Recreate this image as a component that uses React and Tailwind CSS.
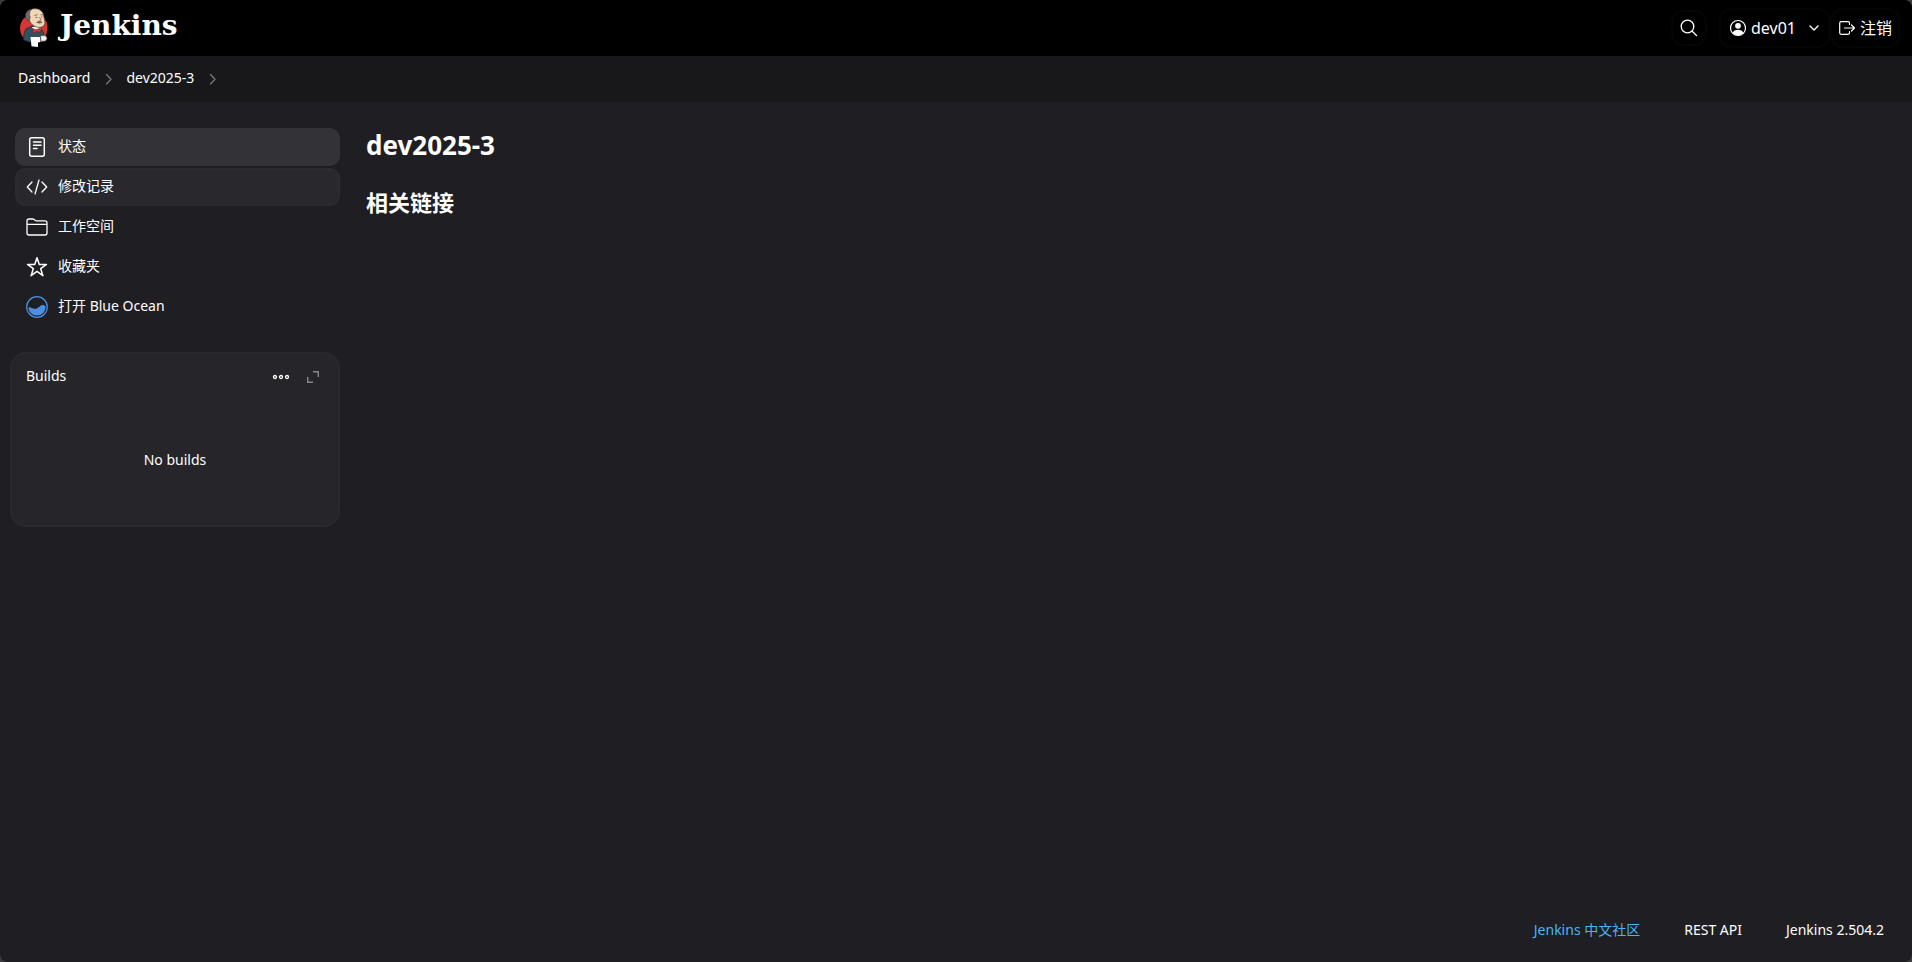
import React from "react";

const line = { fill: "none", stroke: "currentColor", strokeLinecap: "round", strokeLinejoin: "round" };

function JenkinsHead() {
  return (
    <svg viewBox="0 0 28 40" className="h-10 w-7 shrink-0" aria-hidden="true">
      <path d="M14 6c8 0 13.500 6 13.500 13 0 4-1 8-3.500 11H3.500C1 27 0 23.500 0 20 0 12.500 6 6 14 6z" fill="#d33833" />
      <path d="M6 21l6-3 9 2.500 2.500 4 .5 9-15 .5-5.500-2C3.500 28 4 24 6 21z" fill="#335061" stroke="#14242d" strokeWidth=".7" />
      <path d="M12 19l2 4 3-1.500 3 1.500.5-3-4-1.500z" fill="#fff" />
      <path d="M6.500 9C6.500 3.500 10.500.6 15 .6c5.500 0 8.500 3.700 9 8.400l.8 4.500c.5 3-1 5.200-4 5.800-2.500.4-5-.1-7-1.600-2-1.400-3.500-3-4.300-5.200-1.800-.5-3-1.700-3-3.500z" fill="#f0d6b7" stroke="#3a3029" strokeWidth=".6" />
      <path d="M9.200 12.500C6 12 5 9.500 5.500 6.500 6 3.500 8.500 1.300 12 .9 10 2.500 9.200 4.500 9.500 7l.7 2.500z" fill="#6d6b6d" stroke="#2b2a2a" strokeWidth=".5" />
      <path d="M14.500 7.500l3-.8M20.500 6.700l2.500.2M15.500 9.300l2 .2M21 9h1.500M19.500 9.300c.8 1.500 2 2.300 1.200 3.300-.5.600-1.500.4-2 0" fill="none" stroke="#4a3a30" strokeWidth=".7" />
      <path d="M16 14.300c2-1.300 4.500-1.200 6.500 0-1.500 1.400-4.500 1.600-6.500 0z" fill="#6b4f43" />
      <path d="M12.700 20.500l3.500 1.200 3.700-1.400.4 4.400-3.600-1.200-3.300 2z" fill="#d33833" stroke="#7d1616" strokeWidth=".5" />
      <path d="M10.500 29h9.300l.7 5-2.500.500V39l-6.500-.8z" fill="#fff" />
      <path d="M20.500 28l2.500-.5 3 .5 1 2.500-1.500 2.500-4.500.3z" fill="#f0f0f0" stroke="#555" strokeWidth=".6" />
    </svg>
  );
}

function SearchIcon() {
  return (
    <svg viewBox="0 0 20 20" className="size-5" strokeWidth="1.3" {...line}>
      <circle cx="8.500" cy="8.500" r="6.300" />
      <path d="M13.200 13.200L17.500 17.500" />
    </svg>
  );
}

function PersonIcon() {
  return (
    <svg viewBox="0 0 18 18" className="size-[18px] shrink-0">
      <circle cx="9" cy="9" r="7.500" fill="none" stroke="currentColor" strokeWidth="1.200" />
      <circle cx="9" cy="6.800" r="2.900" fill="currentColor" />
      <path d="M3.500 14c1-2.300 3-3.300 5.500-3.300s4.500 1 5.500 3.300A7.500 7.500 0 0 1 9 16.500 7.500 7.500 0 0 1 3.500 14z" fill="currentColor" />
    </svg>
  );
}

function LogoutIcon() {
  return (
    <svg viewBox="0 0 18 18" className="size-[18px] shrink-0" strokeWidth="1.200" {...line}>
      <path d="M11.500 5.500V4.200c0-.9-.6-1.500-1.500-1.500H3.200c-.9 0-1.500.6-1.500 1.500v9.600c0 .9.6 1.500 1.500 1.500H10c.9 0 1.500-.6 1.500-1.500v-1.300M6.500 9h9.800M13.500 6l3 3-3 3" />
    </svg>
  );
}

function ChevronDown() {
  return (
    <svg viewBox="0 0 12 12" className="size-3 shrink-0" strokeWidth="1.400" {...line}>
      <path d="M2 4L6 8 10 4" />
    </svg>
  );
}

function ChevronRight() {
  return (
    <svg viewBox="0 0 12 12" className="mt-0.5 size-3 shrink-0 text-[#77777b]" strokeWidth="1.300" {...line}>
      <path d="M4.500 1.500L9 6.300 4.500 11" />
    </svg>
  );
}

function StatusIcon() {
  return (
    <svg viewBox="0 0 22 22" className="size-[22px]" strokeWidth="1.500" {...line}>
      <rect x="3.700" y="1.700" width="14.600" height="18.600" rx="2" />
      <path d="M7.500 6h7.500M7.500 9.200h7.500M7.500 12.500h3.500" />
    </svg>
  );
}

function CodeIcon() {
  return (
    <svg viewBox="0 0 22 22" className="size-[22px]" strokeWidth="1.300" {...line}>
      <path d="M6 6L1.300 11 6 16M16 6l4.700 5L16 16M13 4L9 18" />
    </svg>
  );
}

function FolderIcon() {
  return (
    <svg viewBox="0 0 22 22" className="size-[22px]" strokeWidth="1.300" {...line}>
      <path d="M1 6V5c0-1.200.8-2 2-2h3.500c.7 0 1.200.2 1.700.6l.8.700c.5.400 1 .5 1.700.5H19c1.200 0 2 .8 2 2v10.200c0 1.100-.9 2-2 2H3c-1.100 0-2-.9-2-2zM1 8.400h20" />
    </svg>
  );
}

function StarIcon() {
  return (
    <svg viewBox="0 0 22 22" className="size-[22px]" strokeWidth="1.500" {...line}>
      <path d="M11 1.800l2.300 6.600h7.200l-5.800 4.300 2.200 7-5.900-4.300-5.900 4.300 2.200-7-5.800-4.300h7.200z" />
    </svg>
  );
}

function BlueOceanIcon() {
  return (
    <svg viewBox="0 0 22 22" className="size-[22px]">
      <circle cx="11" cy="11" r="10.300" fill="none" stroke="#4a90e2" strokeWidth="1.200" />
      <path d="M2.400 11.500c2-.8 3.300 1.300 6.300 1.300 4 0 5-3.800 8-3.800 1.500 0 2.300.6 2.900 1.500A8.600 8.600 0 0 1 11 19.600a8.600 8.600 0 0 1-8.600-8.100z" fill="#4a90e2" />
    </svg>
  );
}

const tasks = [
  { label: "状态", Icon: StatusIcon, look: "bg-[#333237]" },
  { label: "修改记录", Icon: CodeIcon, look: "border-2 border-[#2c2b30] bg-[#29282d]" },
  { label: "工作空间", Icon: FolderIcon, look: "" },
  { label: "收藏夹", Icon: StarIcon, look: "" },
  { label: "打开 Blue Ocean", Icon: BlueOceanIcon, look: "" },
];

export default function App() {
  return (
    <div className="bg-[#3d3d40]">
      <div className="flex min-h-screen flex-col overflow-hidden rounded-lg bg-[#1f1e23] font-['Noto_Sans','Noto_Sans_CJK_SC',sans-serif] text-sm text-white">
        <header className="flex h-14 items-center bg-black pr-3 pl-5">
          <a href="#" className="flex items-center gap-3">
            <JenkinsHead />
            <span className="pb-1 font-['DejaVu_Serif',serif] text-[28px] leading-8 font-bold">Jenkins</span>
          </a>
          <div className="ml-auto flex items-center text-base">
            <button type="button" aria-label="Search" className="mr-3 flex size-9 items-center justify-center rounded-xl border-2 border-[#050505]">
              <SearchIcon />
            </button>
            <a href="#" className="flex h-10 items-center gap-1 rounded-xl border-2 border-[#050505] px-2">
              <PersonIcon />
              <span>dev01</span>
              <span className="ml-2">
                <ChevronDown />
              </span>
            </a>
            <a href="#" className="flex h-10 items-center gap-1 rounded-xl border-2 border-[#050505] px-1.5">
              <LogoutIcon />
              <span>注销</span>
            </a>
          </div>
        </header>

        <nav aria-label="Breadcrumb" className="flex h-[46px] items-center gap-3 bg-[#18181b] px-[18px] pb-0.5">
          <a href="#">Dashboard</a>
          <ChevronRight />
          <a href="#">dev2025-3</a>
          <ChevronRight />
        </nav>

        <div className="flex flex-1 items-start pt-[26px]">
          <aside className="w-[340px] shrink-0 pl-[10px]">
            <nav aria-label="Tasks" className="flex flex-col gap-0.5 pl-[5px]">
              {tasks.map(({ label, Icon, look }) => (
                <a key={label} href="#" className={"rounded-[10px] " + look}>
                  <span className={"flex items-center gap-[10px] " + (look.includes("border") ? "h-[34px] pl-[9px]" : "h-[38px] pl-[11px]")}>
                    <Icon />
                    <span className="pb-0.5">{label}</span>
                  </span>
                </a>
              ))}
            </nav>
            <section className="mt-[26px] flex h-[175px] flex-col rounded-2xl border-2 border-[#2a292e] bg-[#26252a]">
              <div className="flex h-11 items-center pr-[18px] pl-[14px]">
                <h2>Builds</h2>
                <button type="button" aria-label="More" className="mt-0.5 ml-auto">
                  <svg viewBox="0 0 18 8" className="h-2 w-[18px]" strokeWidth="1.300" {...line}>
                    <circle cx="3" cy="4" r="1.500" />
                    <circle cx="9" cy="4" r="1.500" />
                    <circle cx="15" cy="4" r="1.500" />
                  </svg>
                </button>
                <button type="button" aria-label="Expand" className="mt-0.5 ml-4 text-[#88888c]">
                  <svg viewBox="0 0 14 14" className="size-[14px]" strokeWidth="1.400" {...line}>
                    <path d="M7.500 1.700h4.800v4.800M1.700 7.500v4.800h4.800" />
                  </svg>
                </button>
              </div>
              <p className="flex flex-1 items-center justify-center pb-1">No builds</p>
            </section>
          </aside>

          <main className="min-w-0 flex-1 px-[26px]">
            <h1 className="text-[26px] leading-[34px] font-bold">dev2025-3</h1>
            <h2 className="mt-6 text-[22px] leading-8 font-bold">相关链接</h2>
          </main>
        </div>

        <footer className="flex items-center justify-end gap-11 px-7 pt-6 pb-[22px]">
          <a href="#" className="text-[#4ab5f5]">Jenkins 中文社区</a>
          <a href="#">REST API</a>
          <button type="button">Jenkins 2.504.2</button>
        </footer>
      </div>
    </div>
  );
}
